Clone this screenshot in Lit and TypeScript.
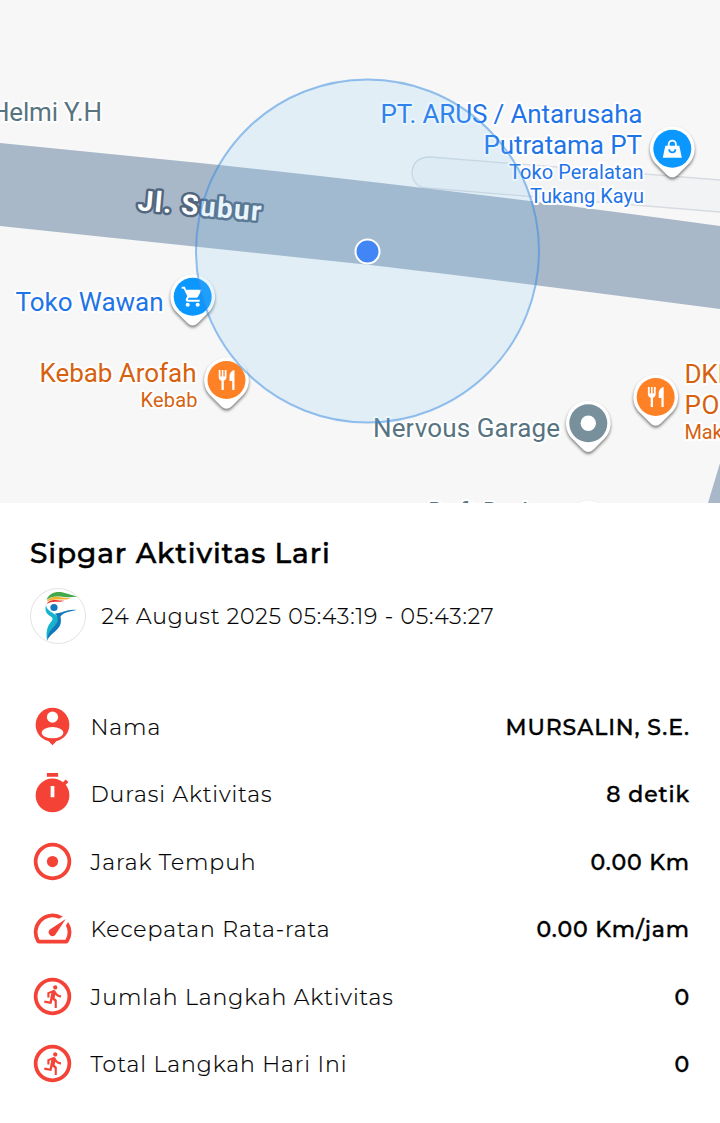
import { LitElement, html, svg, css } from "lit"
import { customElement, property } from "lit/decorators.js"

const ring = svg`<path d="M12 2a10 10 0 1 0 0 20 10 10 0 0 0 0-20zm0 2a8 8 0 1 1 0 16 8 8 0 0 1 0-16z" fill-rule="evenodd"/>`

const icons: Record<string, unknown> = {
	person: svg`<path d="M12 2a9 9 0 0 0-9 9c0 4.2 2.8 7.7 6.8 8.7L12 22l2.2-2.3c4-1 6.8-4.5 6.8-8.7a9 9 0 0 0-9-9z"/><circle cx="12" cy="7" r="3" fill="#fff"/><ellipse cx="12" cy="15.3" rx="5.8" ry="3" fill="#fff"/>`,
	timer: svg`<path fill-rule="evenodd" d="M15 1H9v2h6V1zm-4 13h2V8h-2v6zm8.03-6.61l1.42-1.42c-.43-.51-.9-.99-1.41-1.41l-1.42 1.42C16.07 4.74 14.12 4 12 4c-4.97 0-9 4.03-9 9s4.02 9 9 9 9-4.03 9-9c0-2.12-.74-4.07-1.97-5.61z"/>`,
	target: svg`${ring}<circle cx="12" cy="12" r="3"/>`,
	speed: svg`<path d="M20.38 8.57l-1.23 1.85a8 8 0 0 1-.22 7.58H5.07A8 8 0 0 1 15.58 6.85l1.85-1.23A10 10 0 0 0 3.35 19a2 2 0 0 0 1.72 1h13.85a2 2 0 0 0 1.74-1 10 10 0 0 0-.27-10.44zm-9.79 6.84a2 2 0 0 0 2.83 0l5.66-8.49-8.49 5.66a2 2 0 0 0 0 2.83z"/>`,
	run: svg`${ring}<path transform="translate(5.9 5.2) scale(.56)" d="M13.49 5.48c1.1 0 2-.9 2-2s-.9-2-2-2-2 .9-2 2 .9 2 2 2zm-3.6 13.9l1-4.4 2.1 2v6h2v-7.5l-2.1-2 .6-3c1.3 1.5 3.3 2.5 5.5 2.5v-2c-1.9 0-3.5-1-4.3-2.4l-1-1.6c-.4-.6-1-1-1.7-1-.3 0-.5.1-.8.1l-5.2 2.2v4.7h2v-3.4l1.8-.7-1.6 8.1-4.9-1-.4 2 7 1.4z"/>`,
}

const glyphs: Record<string, unknown> = {
	cart: svg`<path d="M7 18c-1.1 0-1.99.9-1.99 2S5.9 22 7 22s2-.9 2-2-.9-2-2-2zM1 2v2h2l3.6 7.59-1.35 2.45c-.16.28-.25.61-.25.96 0 1.1.9 2 2 2h12v-2H7.42c-.14 0-.25-.11-.25-.25l.03-.12.9-1.63h7.45c.75 0 1.41-.41 1.75-1.03L21 5H5.21l-.94-3H1zm16 16c-1.1 0-1.99.9-1.99 2s.89 2 1.99 2 2-.9 2-2-.9-2-2-2z"/>`,
	food: svg`<path d="M10.2 2v6.5H8.9V2H7.3v6.5H6V2H4.2v7c0 2 1.2 3.3 2.8 3.7V22h2.3v-9.3c1.6-.4 2.7-1.7 2.7-3.7V2zM20 2c-3 .4-5 3.5-5 6.5V13h2.7v9H20z"/>`,
	bag: svg`<path fill-rule="evenodd" d="M5 9h2.5V7.5a4.5 4.5 0 0 1 9 0V9H19l2.500 12h-19zM9.300 9h5.400V7.500a2.700 2.700 0 0 0-5.400 0zM8 12.500a4 4 0 0 0 8 0h-1.800a2.200 2.200 0 0 1-4.400 0z"/>`,
	dot: svg`<circle cx="12" cy="12" r="7.7"/>`,
}

const pins = [
	{ x: 672.3, y: 148.7, color: "#0a97ff", glyph: "bag" },
	{ x: 192.7, y: 296.7, color: "#0a97ff", glyph: "cart" },
	{ x: 226.5, y: 380, color: "#ff8126", glyph: "food" },
	{ x: 655.7, y: 397, color: "#ff8126", glyph: "food" },
	{ x: 588.3, y: 423.3, color: "#78909c", glyph: "dot" },
	{ x: 588.3, y: 523, color: "#78909c", glyph: "dot" },
]

// x is the left edge of each label, w the width it is set to
const places = [
	{ text: "Helmi Y.H", x: -9, y: 121, w: 111, kind: "grey" },
	{ text: "PT. ARUS / Antarusaha", x: 380.5, y: 123, w: 262, kind: "blue" },
	{ text: "Putratama PT", x: 483.5, y: 154, w: 158.5, kind: "blue" },
	{ text: "Toko Peralatan", x: 509, y: 179, w: 134.5, kind: "blue small" },
	{ text: "Tukang Kayu", x: 530, y: 203, w: 114, kind: "blue small" },
	{ text: "Toko Wawan", x: 15.5, y: 310.5, w: 148, kind: "blue" },
	{ text: "Kebab Arofah", x: 39.5, y: 382, w: 157, kind: "orange" },
	{ text: "Kebab", x: 140.5, y: 406.5, w: 57, kind: "orange small" },
	{ text: "Nervous Garage", x: 373, y: 437, w: 187, kind: "grey" },
	{ text: "DKI", x: 684.5, y: 383, w: 40, kind: "orange" },
	{ text: "POM", x: 684.5, y: 414, w: 58, kind: "orange" },
	{ text: "Makanan", x: 684.5, y: 439, w: 81, kind: "orange small" },
	{ text: "Daft Deden", x: 428, y: 521, w: 128, kind: "grey" },
]

@customElement("activity-map")
export class ActivityMap extends LitElement {
	static styles = css`
:host {
	display: block;
	height: 503px;
	overflow: hidden;
}
svg {
	display: block;
}
text {
	font-family: Roboto, sans-serif;
	font-size: 26px;
	stroke: #fff;
	stroke-width: 4px;
	stroke-linejoin: round;
	paint-order: stroke;
}
.small {
	font-size: 20px;
}
.grey {
	fill: #587481;
}
.blue {
	fill: #1f74e8;
}
.orange {
	fill: #d6610f;
}
.street {
	font-size: 28px;
	font-weight: 700;
	fill: #fff;
	stroke: #52677f;
	stroke-width: 5px;
}
.pin {
	filter: drop-shadow(0 2px 1.5px rgba(0, 0, 0, 0.5));
}
`

	pin(p: (typeof pins)[number]) {
		return svg`
		<g transform="translate(${p.x} ${p.y})">
			<path class="pin" fill="#fff" d="M0-22.5A22.5 22.5 0 0 1 17.5 14L5 26.5Q0 31-5 26.5L-17.5 14A22.5 22.5 0 0 1 0-22.5z"/>
			<circle r="19" fill=${p.color} />
			<g transform="translate(-12 -12)" fill="#fff">${glyphs[p.glyph]}</g>
		</g>`
	}

	render() {
		return html`
		<svg width="720" height="503" viewBox="0 0 720 503">
			<rect width="720" height="503" fill="#f7f7f7" />
			<path d="M720 180L430 157Q413 157 412 173Q413 187 427 188L720 212" fill="#f1f3f5" stroke="#d7dae0" stroke-width="1.3" />
			<path d="M0 143L200 163Q450 189 720 226V309Q500 280 370 265L0 226z" fill="#a9b8c9" />
			<path d="M708 503L720 463V503z" fill="#a9b8c9" />
			<text class="street" x="137" y="210" textLength="124" transform="rotate(5 137 210)">Jl. Subur</text>
			${places.map(p => svg`<text class=${p.kind} x=${p.x} y=${p.y} textLength=${p.w}>${p.text}</text>`)}
			${pins.map(p => this.pin(p))}
			<circle cx="367.5" cy="251" r="171.5" fill="rgba(125, 200, 243, 0.18)" stroke="rgba(50, 135, 225, 0.5)" stroke-width="2" />
			<circle cx="367.5" cy="251.5" r="12" fill="#4285f4" stroke="#fff" stroke-width="2" />
		</svg>`
	}
}

@customElement("club-logo")
export class ClubLogo extends LitElement {
	static styles = css`
:host {
	display: block;
	width: 56px;
	height: 56px;
}
svg {
	display: block;
}
`

	render() {
		return html`
		<svg width="56" height="56" viewBox="0 0 56 56">
			<circle cx="28" cy="28" r="27.5" fill="#fff" stroke="#e2e2e2" />
			<path fill="#45a94b" d="M16.5 12C19 5 26 3 33 4.500c5 1.200 9 2.700 14 4-7 1.500-12 .5-17 0-6-.5-10 .5-13.500 3.500z"/>
			<path fill="#f3b233" d="M16.5 13.5c3-4.500 8-5 13-4.500 4 .6 7 1.200 11 1.200-5 2-9 1.300-13 1.300-5 0-8 .8-11 2z"/>
			<path fill="#e5382e" d="M16.5 16c2.500-4 6-4 9.500-4 3 .2 5 .8 8.500.6-3 1.700-6 1.200-9 1.200-4 0-6 .7-9 2.200z"/>
			<circle cx="24" cy="19.5" r="3.6" fill="#1377bd" />
			<path fill="#14b4cf" d="M16 16.5c-1.800 8 1.500 10 5.500 12.500 3 2-1 5-3 8.500-2 4-2.500 9-1.500 15 2-9 5-12 8.500-16 2.500-3 4-5.500 1.500-8.500-3-3.500-11-5-11-11.500z"/>
			<path fill="#0f78b8" d="M25 25.5c8 0 11-4.500 21.500-3.500-6 1.500-12 1.500-16 6.500 1.500 8-1 11-5.500 15-4 3-6 5.500-8 9 1-8 4-11 7.500-15 3.500-4 5-7 .5-12z"/>
		</svg>`
	}
}

@customElement("stat-row")
export class StatRow extends LitElement {
	@property() icon = ""
	@property() label = ""
	@property() value = ""

	static styles = css`
:host {
	display: flex;
	align-items: center;
	height: 45px;
	color: #000;
	font-size: 22px;
	letter-spacing: 0.9px;
}
svg {
	width: 45px;
	height: 45px;
	fill: #f44336;
}
span {
	padding-top: 2px;
}
.label {
	flex: 1;
	margin-left: 15.5px;
	font-weight: 300;
	letter-spacing: 0.93px;
	-webkit-text-stroke: 0.2px #000;
}
.value {
	font-weight: 500;
	-webkit-text-stroke: 0.4px #000;
}
`

	render() {
		return html`
		<svg viewBox="0 0 24 24">${icons[this.icon]}</svg>
		<span class="label">${this.label}</span>
		<span class="value">${this.value}</span>`
	}
}

@customElement("app-root")
export class AppRoot extends LitElement {
	static styles = css`
:host {
	display: block;
	height: 1123px;
	overflow: hidden;
	background: #fff;
	color: #000;
	font-family: Montserrat, Inter, sans-serif;
}
.content {
	padding: 33px 30px 0;
}
h1 {
	margin: 0;
	font-size: 28px;
	font-weight: 500;
	line-height: 34px;
	letter-spacing: 0.9px;
	-webkit-text-stroke: 0.5px #000;
}
.date {
	display: flex;
	align-items: center;
	gap: 15.5px;
	margin-top: 18px;
	font-size: 22px;
	font-weight: 300;
	letter-spacing: 0.88px;
	-webkit-text-stroke: 0.2px #000;
}
.stats {
	display: grid;
	gap: 22.4px;
	margin-top: 60px;
}
`

	render() {
		return html`
		<activity-map></activity-map>
		<div class="content">
			<h1>Sipgar Aktivitas Lari</h1>
			<div class="date">
				<club-logo></club-logo>
				<span>24 August 2025 05:43:19 - 05:43:27</span>
			</div>
			<div class="stats">
				<stat-row icon="person" label="Nama" value="MURSALIN, S.E."></stat-row>
				<stat-row icon="timer" label="Durasi Aktivitas" value="8 detik"></stat-row>
				<stat-row icon="target" label="Jarak Tempuh" value="0.00 Km"></stat-row>
				<stat-row icon="speed" label="Kecepatan Rata-rata" value="0.00 Km/jam"></stat-row>
				<stat-row icon="run" label="Jumlah Langkah Aktivitas" value="0"></stat-row>
				<stat-row icon="run" label="Total Langkah Hari Ini" value="0"></stat-row>
			</div>
		</div>`
	}
}
